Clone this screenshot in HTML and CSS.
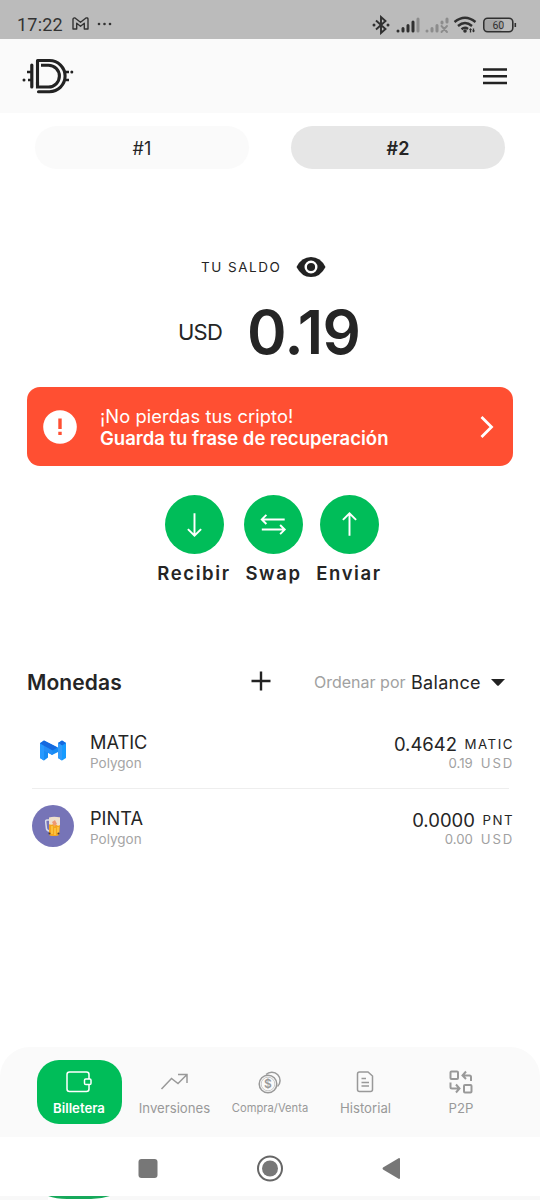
FILE: index.html
```html
<!DOCTYPE html>
<html lang="es">
<head>
<meta charset="utf-8">
<meta name="viewport" content="width=device-width">
<title>Billetera</title>
<link rel="stylesheet" href="styles.css">
</head>
<body>
<div class="screen">
  <div class="status">
    <span class="clock">17:22</span>
    <svg class="gmail" width="17" height="13" viewBox="0 0 17 13" fill="none" stroke="#333" stroke-width="1.4" stroke-linejoin="round"><path d="M1 12V2Q1.500.500 3 1L8.500 5.300 14 1Q15.700.500 16 2V12H12.300V6.300L8.500 9.300 4.700 6.300V12Z"/></svg>
    <svg class="dots" width="15" height="4" viewBox="0 0 15 4" fill="#333"><circle cx="2" cy="2" r="1.300"/><circle cx="7.500" cy="2" r="1.300"/><circle cx="13" cy="2" r="1.300"/></svg>
    <svg class="system" width="146" height="20" viewBox="0 0 146 20">
      <g fill="none" stroke="#303030" stroke-width="1.900"><path d="M4 5.500L13.500 14 9 18V2L13.500 6 4 14.500"/></g>
      <g fill="#303030"><circle cx="2" cy="10" r="1.500"/><circle cx="16" cy="10" r="1.500"/></g>
      <g stroke="#303030" stroke-width="3" stroke-linecap="round"><path d="M26 16v.1M31 13.500V16M36 10.500V16M41 7V16"/><path stroke="#8c8c8c" d="M46 4V16"/></g>
      <g stroke="#8c8c8c" stroke-width="3" stroke-linecap="round"><path d="M55 16v.1M60 13.500V16M65 10.500V16M70 7V8M75 4V7"/><path stroke-width="1.900" d="M69.500 11L75 17M75 11L69.500 17"/></g>
      <g fill="none" stroke="#303030" stroke-width="2.400"><path d="M82.500 7Q93-1.500 103.500 7M86 11Q93 5 100 11M89.500 14.300Q93 11.500 96 14"/></g>
      <circle cx="93" cy="16" r="1.800" fill="#303030"/><path d="M98.500 17.500V14M101.500 13.500V17" stroke="#303030" stroke-width="1.300"/><path d="M97 15l1.500-2 1.500 2M100 15.500l1.500 2 1.500-2" fill="#303030"/>
      <rect x="113" y="4.500" width="17" height="11.500" rx="2" fill="#a5a5a5"/>
      <rect x="111.800" y="3.300" width="29" height="13.400" rx="3.800" fill="none" stroke="#303030" stroke-width="1.600"/><path d="M143.300 8v4" stroke="#303030" stroke-width="1.600"/>
      <text class="battery" x="126.300" y="14" text-anchor="middle">60</text>
    </svg>
  </div>

  <header class="header">
    <svg width="52" height="38" viewBox="22 57 52 38" fill="none" stroke="#222" stroke-width="3.1">
      <path d="M37.500 85V60.500H49.500A15.600 15.600 0 0 1 49.500 91.700H38.500" stroke-linecap="round" stroke-linejoin="round"/>
      <path d="M37.500 82V87H48.500A10.900 10.900 0 0 0 48.500 65.200H41"/>
      <path d="M31.800 65V87" stroke-width="3.200" stroke-linecap="round"/>
      <path d="M27 72H31M28 80H31M65 72H69M65 80H69" stroke-width="2.500"/>
      <g fill="#222" stroke="none"><circle cx="24" cy="80" r="1.500"/><circle cx="71.800" cy="72" r="1.500"/></g>
    </svg>
    <svg width="24" height="17" viewBox="0 0 24 17"><path d="M0 1.500H24M0 8.200H24M0 15H24" stroke="#222" stroke-width="2.600"/></svg>
  </header>

  <nav class="accounts"><span class="account">#1</span><span class="account account-on">#2</span></nav>

  <section class="balance">
    <div class="caption"><span class="caption-text">TU SALDO</span>
      <svg width="30" height="20" viewBox="0 0 30 20"><path d="M.5 10Q5.500 0 15 0T29.500 10Q24.500 20 15 20T.5 10Z" fill="#222"/><circle cx="15" cy="10" r="5.300" fill="none" stroke="#fff" stroke-width="2.400"/></svg>
    </div>
    <div class="amount"><span class="currency">USD</span><strong class="total">0.19</strong></div>
  </section>

  <section class="alert">
    <svg width="34" height="34" viewBox="0 0 34 34"><circle cx="17" cy="17" r="16.800" fill="#fff"/><path d="M17 8.500V19M17 21.700V25" stroke="#ff4f32" stroke-width="3.400"/></svg>
    <div class="alert-copy"><span class="alert-lead">¡No pierdas tus cripto!</span><strong class="alert-main">Guarda tu frase de recuperación</strong></div>
    <svg class="chevron" width="14" height="22" viewBox="0 0 14 22" fill="none" stroke="#fff" stroke-width="2.800"><path d="M1.500 1L11.500 11 1.500 21"/></svg>
  </section>

  <section class="actions">
    <div class="action receive"><svg viewBox="0 0 58 58"><circle cx="29" cy="29" r="29"/><path d="M29 18V40M22.500 33.500L29 40 35.500 33.500"/></svg><span>Recibir</span></div>
    <div class="action swap"><svg viewBox="0 0 58 58"><circle cx="29" cy="29" r="29"/><path d="M40 24H17.500M22 19.500L17.500 24 22 28.500M17.500 34H40M35.500 29.500L40 34 35.500 38.500"/></svg><span>Swap</span></div>
    <div class="action send"><svg viewBox="0 0 58 58"><circle cx="29" cy="29" r="29"/><path d="M29 40V18M22.500 24.500L29 18 35.500 24.500"/></svg><span>Enviar</span></div>
  </section>

  <section class="coins">
    <div class="coins-head">
      <h2>Monedas</h2>
      <svg class="plus" width="20" height="20" viewBox="0 0 20 20"><path d="M10 .5V19.500M.5 10H19.500" stroke="#222" stroke-width="2.400"/></svg>
      <span class="sort-label">Ordenar por</span><span class="sort-value">Balance</span>
      <svg class="caret" width="14" height="7" viewBox="0 0 14 7"><path d="M0 0H14L7.800 6.500Q7 7 6.200 6.500Z" fill="#222"/></svg>
    </div>
    <div class="coin">
      <svg class="coin-icon" width="42" height="42" viewBox="0 0 42 42">
        <path d="M8 13L12 10.500 26 17.500V22L20 25 16 22.500V27.500L12 30.500 8 28Z" fill="#168bf4"/>
        <path d="M12 10.500L25.500 17.500 20.500 20.500 8 13.500Z" fill="#1569df"/>
        <path d="M8 13.500L12 16V30.500L8 28Z" fill="#2699ff"/>
        <path d="M12 16L20.500 20.500V25L12 21Z" fill="#248df6"/>
        <path d="M26 13L30 10.500 34 13V28L30 30.500 26 28Z" fill="#169bff"/>
        <path d="M26 13L30 10.500 34 13 30 15.500Z" fill="#1569df"/>
        <path d="M26 13L30 15.500V30.500L26 28Z" fill="#319bfa"/>
      </svg>
      <div class="coin-name"><span class="coin-symbol">MATIC</span><span class="network">Polygon</span></div>
      <div class="coin-value"><span class="quantity"><span>0.4642</span><small>MATIC</small></span><span class="fiat"><span>0.19</span><small>USD</small></span></div>
    </div>
    <div class="divider"></div>
    <div class="coin">
      <svg class="coin-icon" width="42" height="42" viewBox="0 0 42 42"><circle cx="21" cy="21" r="21" fill="#7674b7"/><path d="M18 15L15 15Q13.500 15 13.700 17L14.500 24Q15 26 18 26" fill="none" stroke="#d8dce8" stroke-width="1.500"/><path d="M17 13L28 12.500 27 30Q22 32 17 30Z" fill="#efb64c"/><path d="M17 20L21 18 22 22 25 19 28 20 27 30Q22 32 17 30Z" fill="#f5a51b"/><path d="M17 12.500Q22 11 28 12.500V20Q25 22 23 18Q20 21 17 19Z" fill="#eee0cc"/><path d="M20 17L23 15 25 19 22 21Z" fill="#ee9872"/><path d="M20 21V29M23 23V30M26 22V28" stroke="#ffd454" stroke-width="1.200"/><circle cx="17.500" cy="28.500" r="1" fill="#433845"/><circle cx="26.500" cy="28.500" r="1" fill="#433845"/></svg>
      <div class="coin-name"><span class="coin-symbol">PINTA</span><span class="network">Polygon</span></div>
      <div class="coin-value"><span class="quantity"><span>0.0000</span><small>PNT</small></span><span class="fiat"><span>0.00</span><small>USD</small></span></div>
    </div>
  </section>

  <nav class="tabs">
    <div class="tab tab-on"><svg width="28" height="24" viewBox="0 0 28 24"><rect x="2" y="2" width="22" height="19.500" rx="2.500"/><rect x="19.500" y="9" width="6.500" height="5.500" rx="1.300" fill="#00bd59"/></svg><span>Billetera</span></div>
    <div class="tab"><svg width="28" height="24" viewBox="0 0 28 24"><path d="M1.500 19L11.500 8.500 18 13.500 27 4.500M18 4.500H27V13"/></svg><span>Inversiones</span></div>
    <div class="tab trade"><svg width="28" height="24" viewBox="0 0 28 24"><circle cx="12" cy="14" r="8.800"/><path d="M10 4.500A8 8 0 1 1 21.500 16.500"/><circle cx="12" cy="14" r="6.800" stroke-width=".5"/><text x="12" y="18">$</text></svg><span>Compra/Venta</span></div>
    <div class="tab"><svg width="28" height="24" viewBox="0 0 28 24"><path d="M8.500 2H17L21.500 6V19.500Q21.500 21.500 19.500 21.500H8.500Q6.500 21.500 6.500 19.500V4Q6.500 2 8.500 2ZM10.500 8.500H15M10.500 12.500H18M10.500 16H18"/></svg><span>Historial</span></div>
    <div class="tab"><svg class="p2p" width="28" height="24" viewBox="0 0 28 24"><rect x="3.500" y="1.500" width="7.500" height="7.500" rx="1"/><rect x="17" y="15" width="7.500" height="7.500" rx="1"/><path d="M24 11V7Q24 5.500 22.500 5.500H15.500M19 1.500L15.500 5.500 19 9M3.500 12.500V17Q3.500 18.500 5 18.500H12.500M9 14.500L12.500 18.500 9 22.500"/></svg><span>P2P</span></div>
  </nav>

  <div class="system-nav">
    <svg width="540" height="63" viewBox="0 1137 540 63"><path d="M48 1196H110Q101 1199 91 1199H67Q56 1199 48 1196Z" fill="#17a95b"/><path d="M0 1198H48M110 1198H540" stroke="#f8f8f8" stroke-width="4"/><rect x="138.500" y="1159" width="19" height="19" rx="3" fill="#777"/><circle cx="270" cy="1168.500" r="12" fill="none" stroke="#666" stroke-width="2"/><circle cx="270" cy="1168.500" r="8" fill="#777"/><path d="M383 1167.500L399 1158Q400 1158 400 1159V1178Q400 1179 399 1179L383 1169.500Q382 1168.500 383 1167.500Z" fill="#777"/></svg>
  </div>
</div>
</body>
</html>
```
FILE: styles.css
```css
* { box-sizing: border-box; }
body { margin: 0; background: #fff; color: #252525; font-family: Inter, sans-serif; }
svg { display: block; flex: none; }
.screen { width: 540px; height: 1200px; display: flex; flex-direction: column; overflow: hidden; }
.status { height: 39px; flex: none; background: #bbb; display: flex; align-items: center; padding: 10px 22px 0 17px; }
.clock { width: 55px; font: 400 18px/22px Roboto, sans-serif; color: #333; letter-spacing: .2px; }
.gmail { margin-top: -2px; }
.dots { margin-left: 8px; margin-top: -2px; }
.system { margin-left: auto; }
.battery { font: 400 10.500px Roboto, sans-serif; fill: #303030; }
.header { height: 74px; flex: none; padding: 0 33px 0 22px; background: #fafafa; display: flex; align-items: center; justify-content: space-between; }
.accounts { display: grid; grid-template-columns: 214px 214px; justify-content: space-between; padding: 13px 35px 0; }
.account { height: 43px; border-radius: 22px; background: #fafafa; font-size: 18px; line-height: 46px; text-align: center; letter-spacing: .2px; }
.account-on { background: #e6e6e6; font-weight: 600; }
.balance { height: 218px; flex: none; padding-top: 88px; }
.caption { display: flex; align-items: center; height: 20px; padding-left: 201px; }
.caption-text { width: 94.500px; font-size: 13.500px; letter-spacing: 1.500px; white-space: nowrap; }
.amount { display: flex; height: 74px; margin-top: 18px; padding-left: 178px; line-height: 74px; align-items: center; }
.currency { width: 69px; font-size: 22px; letter-spacing: -.8px; }
.total { font-size: 60px; font-weight: 600; letter-spacing: -.5px; }
.alert { height: 79px; flex: none; margin: 0 27px; padding: 0 19px 0 16px; background: #ff4f32; border-radius: 13px; display: flex; align-items: center; color: #fff; }
.alert-copy { display: flex; flex-direction: column; margin-left: 23px; font-size: 18.500px; line-height: 22.500px; padding-top: 1px; white-space: nowrap; }
.alert-lead { font-size: 18.300px; letter-spacing: .1px; }
.alert-main { font-weight: 600; }
.chevron { margin-left: auto; }
.actions { display: flex; height: 194px; flex: none; padding: 29px 0 0 157px; }
.action { display: flex; flex-direction: column; align-items: center; font-size: 18.500px; font-weight: 600; line-height: 24px; letter-spacing: 1.600px; }
.action svg { width: 59px; height: 59px; margin-bottom: 7px; fill: none; stroke: #fff; stroke-width: 1.900; }
.action circle { fill: #00bd59; stroke: none; }
.receive { width: 74px; }.swap { width: 85px; }.send { width: 66px; }
.coins { flex: 1; }
.coins-head { height: 53px; padding: 6px 35px 0 27px; display: flex; align-items: flex-start; line-height: 33px; }
h2 { width: 224px; margin: 0; font-size: 21px; font-weight: 600; line-height: 33px; letter-spacing: .1px; }
.plus { margin-top: 5px; }
.sort-label { width: 97px; margin-left: 43px; color: #a1a1a1; font-size: 16px; }
.sort-value { font-size: 18px; letter-spacing: .3px; }
.caret { margin: 13px 0 0 auto; }
.coin { height: 75px; margin: 0 27px 0 32px; display: flex; align-items: center; }
.divider { height: 1px; margin: 0 31px 0 32px; background: #eee; }
.divider + .coin .coin-icon { margin-top: -1px; }
.coin-name { display: flex; flex-direction: column; margin-left: 16px; line-height: 21.500px; padding-top: 5px; }
.coin-symbol { font-size: 18.200px; }
.network { font-size: 13.500px; color: #a5a5a5; }
.coin-value { display: flex; flex-direction: column; align-items: flex-end; margin: 0 -1px 0 auto; padding-top: 4px; }
.quantity, .fiat { display: flex; align-items: center; }
.quantity { gap: 7.500px; font-size: 18.500px; line-height: 20px; }
.quantity small { font-size: 13.300px; letter-spacing: 1.500px; }
.fiat { gap: 8px; color: #a1a1a1; font-size: 13.200px; line-height: 18px; }
.fiat small { font-size: 13.200px; letter-spacing: 1.800px; }
.tabs { height: 90px; flex: none; display: grid; grid-template-columns: repeat(5, 95.500px); padding: 13px 31px; background: #fafafa; border-radius: 30px 30px 0 0; }
.tab { width: 85px; height: 64px; margin-left: 5.500px; padding-top: 10px; display: flex; flex-direction: column; align-items: center; color: #999; font-size: 13.200px; line-height: 20px; white-space: nowrap; }
.tab svg { margin: 0 1px 4px 0; fill: none; stroke: currentColor; stroke-width: 1.500; }
.tab-on { background: #00bd59; color: #fff; border-radius: 22px; font-weight: 600; }
.trade { font-size: 11.200px; }
.trade text { font: 600 12px Inter, sans-serif; fill: #999; stroke: none; text-anchor: middle; }
.tab .p2p { stroke-width: 2; }
.system-nav { height: 63px; flex: none; }
```
